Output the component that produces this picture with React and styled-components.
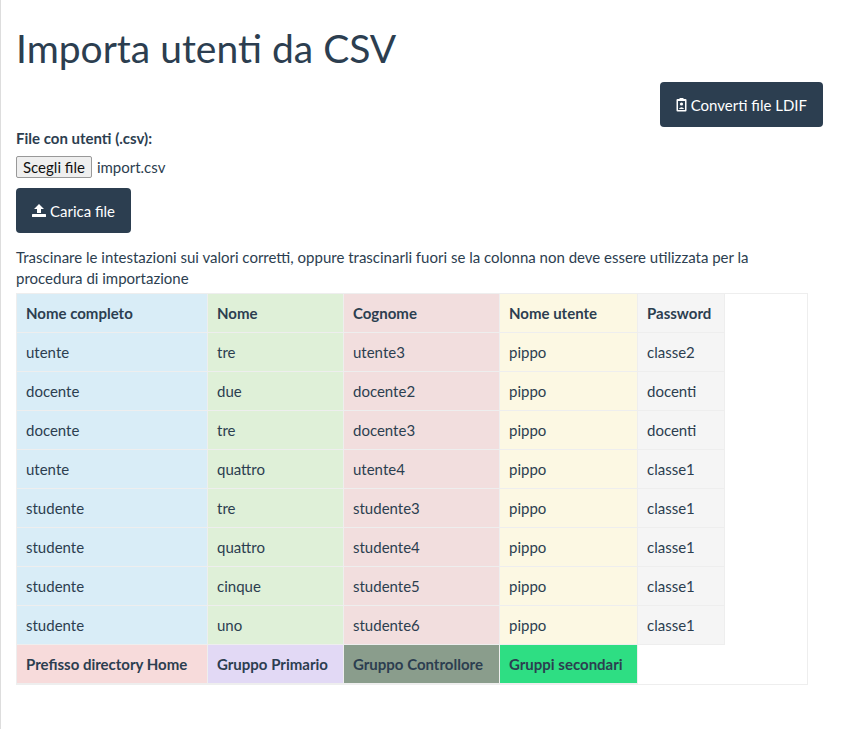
import React from 'react';
import styled, { createGlobalStyle } from 'styled-components';

const Global = createGlobalStyle`
  body { margin: 0; font-family: Lato, "Open Sans", sans-serif; color: #2c3e50; background: #fff; }
`;

const Page = styled.div`
  min-height: 729px;
  border-left: 1px solid #ddd;
  padding: 0 15px;
  box-sizing: border-box;
`;

const Title = styled.h1`
  font-size: 39px;
  font-weight: 400;
  margin: 0;
  padding-top: 24px;
  line-height: 48px;
`;

const TopBar = styled.div`
  display: flex;
  justify-content: flex-end;
  padding-right: 8px;
  margin-top: 10px;
`;

const Button = styled.button`
  background: #2c3e50;
  color: #fff;
  border: none;
  border-radius: 4px;
  font-family: Lato, sans-serif;
  font-size: 15px;
  height: 45px;
  padding: 0 16px;
  display: flex;
  align-items: center;
  gap: 4px;
`;

const Label = styled.div`
  font-weight: 700;
  font-size: 15px;
  margin-top: 2px;
`;

const FileRow = styled.div`
  display: flex;
  align-items: center;
  gap: 5px;
  margin-top: 9px;
  font-size: 15px;
`;

const FileBtn = styled.span`
  border: 1px solid #999;
  background: #efefef;
  border-radius: 2px;
  padding: 1px 6px;
  font-size: 15px;
  color: #111;
`;

const UploadWrap = styled.div`
  margin-top: 10px;
`;

const Hint = styled.p`
  font-size: 15px;
  line-height: 21px;
  margin: 14px 0 4px;
  max-width: 780px;
`;

const Table = styled.div`
  width: 792px;
  border: 1px solid #eee;
  box-sizing: border-box;
`;

const Row = styled.div`
  display: flex;
`;

const Cell = styled.div`
  width: ${p => p.w}px;
  height: 39px;
  box-sizing: border-box;
  border: 1px solid #eee;
  border-width: 0 1px 1px 0;
  background: ${p => p.bg};
  padding: 0 9px;
  display: flex;
  align-items: center;
  font-size: 15px;
  font-weight: ${p => (p.bold ? 700 : 400)};
`;

const widths = [191, 136, 156, 138, 87];
const colours = ['#d9edf7', '#dff0d8', '#f2dede', '#fcf8e3', '#f5f5f5'];
const head = ['Nome completo', 'Nome', 'Cognome', 'Nome utente', 'Password'];
const rows = [
  ['utente', 'tre', 'utente3', 'pippo', 'classe2'],
  ['docente', 'due', 'docente2', 'pippo', 'docenti'],
  ['docente', 'tre', 'docente3', 'pippo', 'docenti'],
  ['utente', 'quattro', 'utente4', 'pippo', 'classe1'],
  ['studente', 'tre', 'studente3', 'pippo', 'classe1'],
  ['studente', 'quattro', 'studente4', 'pippo', 'classe1'],
  ['studente', 'cinque', 'studente5', 'pippo', 'classe1'],
  ['studente', 'uno', 'studente6', 'pippo', 'classe1'],
];
const extra = [
  ['Prefisso directory Home', '#f7dbdb'],
  ['Gruppo Primario', '#e2d9f5'],
  ['Gruppo Controllore', '#8a9d8c'],
  ['Gruppi secondari', '#2ede83'],
];

const BadgeIcon = () => (
  <svg width="11" height="14" viewBox="0 0 11 14">
    <rect x="0.5" y="1" width="10" height="12.5" rx="1" fill="#fff" />
    <rect x="3.5" y="0" width="4" height="2.5" rx="0.5" fill="#fff" />
    <rect x="2" y="3" width="7" height="9" fill="#2c3e50" />
    <circle cx="5.5" cy="6" r="1.6" fill="#fff" />
    <path d="M2.8 11 Q5.5 7.4 8.2 11 Z" fill="#fff" />
  </svg>
);

const UploadIcon = () => (
  <svg width="14" height="13" viewBox="0 0 14 13">
    <path d="M7 0 L12 5 H9 V9 H5 V5 H2 Z" fill="#fff" />
    <rect x="0" y="10" width="14" height="3" rx="0.5" fill="#fff" />
  </svg>
);

export default function App() {
  return (
    <>
      <Global />
      <Page>
        <Title>Importa utenti da CSV</Title>
        <TopBar>
          <Button><BadgeIcon />Converti file LDIF</Button>
        </TopBar>
        <Label>File con utenti (.csv):</Label>
        <FileRow>
          <FileBtn>Scegli file</FileBtn>
          <span>import.csv</span>
        </FileRow>
        <UploadWrap>
          <Button><UploadIcon />Carica file</Button>
        </UploadWrap>
        <Hint>
          Trascinare le intestazioni sui valori corretti, oppure trascinarli fuori se la colonna non deve essere utilizzata per la procedura di importazione
        </Hint>
        <Table>
          <Row>
            {head.map((h, i) => (
              <Cell key={h} w={widths[i]} bg={colours[i]} bold>{h}</Cell>
            ))}
          </Row>
          {rows.map((r, ri) => (
            <Row key={ri}>
              {r.map((v, i) => (
                <Cell key={i} w={widths[i]} bg={colours[i]}>{v}</Cell>
              ))}
            </Row>
          ))}
          <Row>
            {extra.map(([t, bg], i) => (
              <Cell key={t} w={widths[i]} bg={bg} bold>{t}</Cell>
            ))}
          </Row>
        </Table>
      </Page>
    </>
  );
}
